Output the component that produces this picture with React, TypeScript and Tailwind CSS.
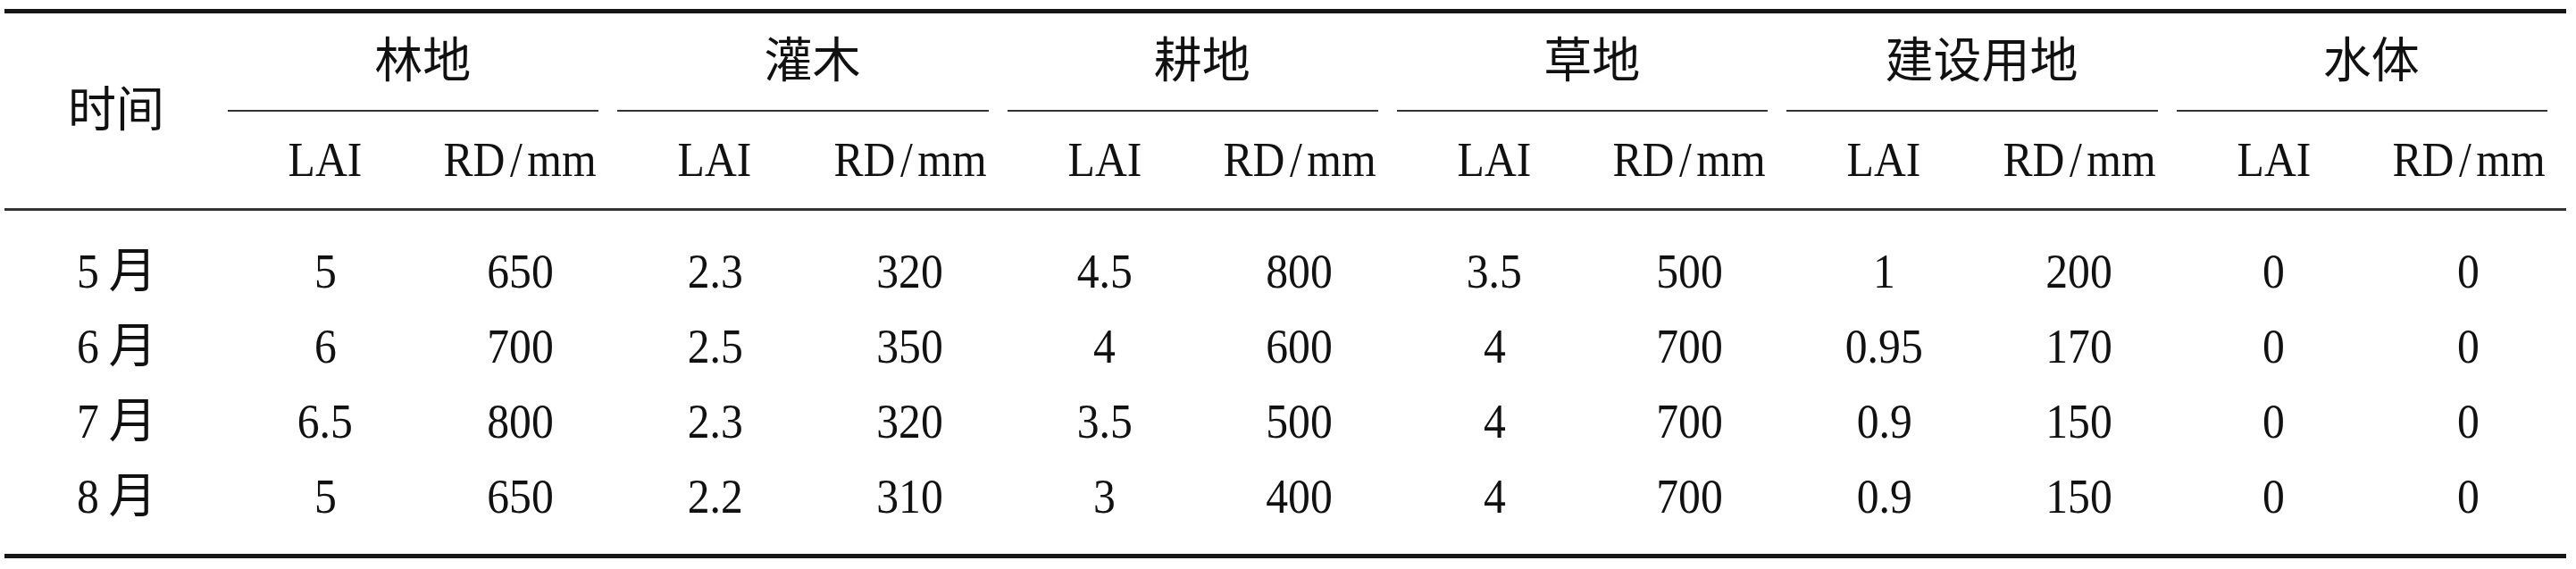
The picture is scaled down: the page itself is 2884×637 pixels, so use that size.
import React from "react";

const groups = ["林地", "灌木", "耕地", "草地", "建设用地", "水体"];

const rows: { m: string; v: string[] }[] = [
  { m: "5", v: ["5", "650", "2.3", "320", "4.5", "800", "3.5", "500", "1", "200", "0", "0"] },
  { m: "6", v: ["6", "700", "2.5", "350", "4", "600", "4", "700", "0.95", "170", "0", "0"] },
  { m: "7", v: ["6.5", "800", "2.3", "320", "3.5", "500", "4", "700", "0.9", "150", "0", "0"] },
  { m: "8", v: ["5", "650", "2.2", "310", "3", "400", "4", "700", "0.9", "150", "0", "0"] },
];

const font = {
  fontFamily: '"Liberation Serif", "Noto Sans CJK SC", serif',
};

function N({ children }: { children: React.ReactNode }) {
  return <span className="inline-block whitespace-nowrap scale-x-[0.92]">{children}</span>;
}

export default function App() {
  return (
    <div className="w-[2884px] h-[637px] bg-white text-[#111]" style={font}>
      <div className="ml-[5px] w-[2868px] pt-[10px] text-[54px] leading-none">
        <div className="h-[5px] bg-[#161616]" />
        <div className="flex">
          <div className="w-[250px] flex items-center justify-center">时间</div>
          <div className="flex-1 grid grid-cols-6">
            {groups.map((g) => (
              <div key={g} className="flex flex-col">
                <div className="h-[108px] flex items-center justify-center">{g}</div>
                <div className="h-[2px] mr-[21px] bg-[#333]" />
                <div className="h-[108px] grid grid-cols-2">
                  <div className="flex items-center justify-center">
                    <N>LAI</N>
                  </div>
                  <div className="flex items-center justify-center">
                    <N>
                      RD<span className="mx-[6px]">/</span>mm
                    </N>
                  </div>
                </div>
              </div>
            ))}
          </div>
        </div>
        <div className="h-[3px] bg-[#333]" />
        <div className="pt-[26px] pb-[22px]">
          {rows.map((r) => (
            <div key={r.m} className="h-[84px] grid grid-cols-[250px_repeat(12,minmax(0,1fr))]">
              <div className="flex items-center justify-center">
                <N>{r.m}</N>
                <span className="ml-[10px]">月</span>
              </div>
              {r.v.map((x, i) => (
                <div key={i} className="flex items-center justify-center">
                  <N>{x}</N>
                </div>
              ))}
            </div>
          ))}
        </div>
        <div className="h-[5px] bg-[#161616]" />
      </div>
    </div>
  );
}
